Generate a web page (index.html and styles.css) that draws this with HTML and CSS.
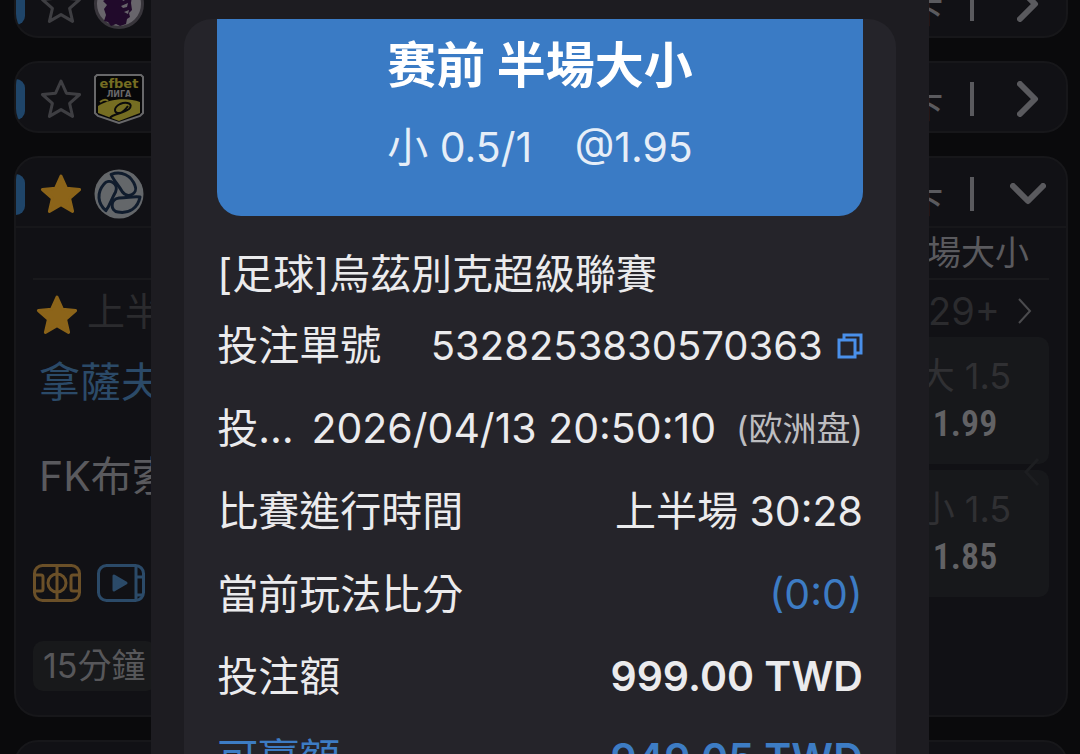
FILE: index.html
```html
<!DOCTYPE html>
<html lang="zh-Hant">

<head>
    <meta charset="UTF-8">
    <meta name="viewport" content="width=device-width, initial-scale=1.0">
    <title>投注單</title>

    <link rel="stylesheet" href="styles.css">
</head>

<body>
    <!-- Shared icon shapes -->
    <svg class="sprite" aria-hidden="true">
        <symbol id="star" viewBox="0 0 42 42">
            <path d="M21 3l5.4 12.200 13.200 1.300-10 8.800 3 13.100L21 31.600l-11.600 6.800 3-13.100-10-8.800 13.200-1.300z" stroke-linejoin="round" />
        </symbol>
        <symbol id="chevron" viewBox="0 0 22 36">
            <path d="M3 3l15 15L3 33" fill="none" stroke="currentColor" stroke-width="6" stroke-linecap="round" stroke-linejoin="round" />
        </symbol>
    </svg>

    <main class="league-list">
        <section class="league">
            <header class="league-head">
                <span class="tab"></span>
                <button class="star" aria-label="收藏"><svg><use href="#star" /></svg></button>
                <svg class="logo" viewBox="0 0 50 50">
                    <circle cx="25" cy="25" r="23.500" fill="#68656b" stroke="#38353b" stroke-width="3" />
                    <path d="M14 12l5 2 3-5 4 4 6-3 1 5 5 2-1 7 1 7-3 3 1 4-3 2-1 5-6 2-4-2-5 2-3-4-4-1 2-6-2-6 3-4-4-4 5-3z" fill="#210a2b" />
                    <path d="M26 20l6-1-2 3zM27 27l7-3-1 4-4 1zM30 33l5-2-1 4z" fill="#68656b" />
                </svg>
                <span class="down">下</span>
                <span class="bar"></span>
                <button class="toggle" aria-label="展開"><svg><use href="#chevron" /></svg></button>
            </header>
        </section>

        <section class="league">
            <header class="league-head">
                <span class="tab"></span>
                <button class="star" aria-label="收藏"><svg><use href="#star" /></svg></button>
                <svg class="logo" viewBox="0 0 50 50">
                    <path d="M3 1h44l2 2v36l-3 3-21 7-21-7-3-3V3z" fill="#070708" stroke="#68686a" stroke-width="2" />
                    <path d="M4 32c10-7 29-9 42-4v11l-21 8-21-8z" fill="#756d22" />
                    <path d="M16 44c2-4 12-4 19-9 5-5-2-8-9-5-7 4-6 9-1 9 4 0 9-7 9-7" fill="none" stroke="#0b0b0c" stroke-width="2" />
                    <path d="M6 28q5-4 8-1" fill="none" stroke="#756d22" stroke-width="2" />
                    <text class="logo-name" x="25" y="14">efbet</text>
                    <text class="logo-sub" x="25" y="23">ЛИГА</text>
                </svg>
                <span class="down">下</span>
                <span class="bar"></span>
                <button class="toggle" aria-label="展開"><svg><use href="#chevron" /></svg></button>
            </header>
        </section>

        <section class="league open">
            <header class="league-head">
                <span class="tab"></span>
                <button class="star active" aria-label="取消收藏"><svg><use href="#star" /></svg></button>
                <svg class="logo" viewBox="0 0 50 50">
                    <circle cx="25" cy="25" r="24.500" fill="#64676a" />
                    <g fill="#64676a" stroke="#101c2d" stroke-width="3" stroke-linejoin="round">
                        <path id="drop" d="M46 28C39 27 34 29 25 29c-9 1-9 13-1 14 11 2 20-4 22-15z" />
                        <use href="#drop" transform="rotate(120 25 25)" />
                        <use href="#drop" transform="rotate(240 25 25)" />
                    </g>
                </svg>
                <span class="down">下</span>
                <span class="bar"></span>
                <button class="toggle expanded" aria-label="收合"><svg><use href="#chevron" /></svg></button>
            </header>

            <div class="league-body">
                <div class="market-head"><span>半場大小</span></div>

                <div class="match-bar">
                    <button class="star active" aria-label="取消收藏"><svg><use href="#star" /></svg></button>
                    <span class="period">上半場</span>
                    <a class="more" href="#">29+
                        <svg viewBox="0 0 14 28"><path d="M1 2l11 12L1 26" fill="none" stroke="currentColor" stroke-width="2" /></svg>
                    </a>
                </div>

                <div class="match">
                    <div class="teams">
                        <p class="team home">拿薩夫</p>
                        <p class="team">FK布索</p>
                        <div class="media">
                            <svg class="pitch" viewBox="0 0 48 38" fill="none" stroke="currentColor" stroke-width="3">
                                <rect x="1.500" y="1.500" width="45" height="35" rx="8" />
                                <path d="M24 1v36M2 11h6q2 0 2 2v12q0 2-2 2H2M46 11h-6q-2 0-2 2v12q0 2 2 2h6" />
                                <circle cx="24" cy="19" r="9" />
                            </svg>
                            <svg class="video" viewBox="0 0 48 38" fill="none" stroke="currentColor" stroke-width="3">
                                <rect x="1.500" y="1.500" width="45" height="35" rx="8" />
                                <path d="M39 1v36M39 13h8M39 31h6" />
                                <path d="M17 12v14l12-7z" fill="currentColor" stroke-linejoin="round" />
                            </svg>
                        </div>
                    </div>
                    <div class="odds">
                        <button class="odd"><span>大 1.5</span><b>1.99</b></button>
                        <button class="odd"><span>小 1.5</span><b>1.85</b></button>
                        <svg class="back" viewBox="0 0 18 30"><path d="M15 2L3 15l12 13" fill="none" stroke="currentColor" stroke-width="3" /></svg>
                    </div>
                </div>

                <button class="chip">15分鐘</button>
            </div>
        </section>

        <section class="league">
            <header class="league-head">
                <span class="tab"></span>
                <button class="star" aria-label="收藏"><svg><use href="#star" /></svg></button>
                <svg class="logo" viewBox="0 0 50 50"><circle cx="25" cy="25" r="24" fill="#4a4a4d" /></svg>
            </header>
        </section>
    </main>

    <!-- Bet slip -->
    <div class="modal" role="dialog" aria-label="投注單">
        <div class="slip">
            <div class="slip-head">
                <div class="slip-title">
                    <h1>赛前 半場大小</h1>
                    <p><span>小 0.5/1</span><span>@1.95</span></p>
                </div>
            </div>

            <h2 class="slip-league">[足球]烏茲別克超級聯賽</h2>

            <dl class="slip-rows">
                <div class="row">
                    <dt>投注單號</dt>
                    <dd class="number">5328253830570363
                        <button class="copy" aria-label="複製">
                            <svg viewBox="0 0 26 26" fill="none" stroke="currentColor" stroke-width="3">
                                <path d="M2 7h16v17H2zM7 7V2h17v18h-6" />
                            </svg>
                        </button>
                    </dd>
                </div>
                <div class="row">
                    <dt>投注時間</dt>
                    <dd>2026/04/13 20:50:10 <small>(欧洲盘)</small></dd>
                </div>
                <div class="row">
                    <dt>比賽進行時間</dt>
                    <dd>上半場 30:28</dd>
                </div>
                <div class="row">
                    <dt>當前玩法比分</dt>
                    <dd class="blue">(0:0)</dd>
                </div>
                <div class="row">
                    <dt>投注額</dt>
                    <dd class="amount">999.00 TWD</dd>
                </div>
                <div class="row blue">
                    <dt>可贏額</dt>
                    <dd class="amount">949.05 TWD</dd>
                </div>
            </dl>
        </div>
    </div>
</body>
</html>
```
FILE: styles.css
```css
* {
    margin: 0;
    padding: 0;
    box-sizing: border-box;
}

body {
    background-color: #0a0a0c;
    color: #ebebed;
    font-family: Inter, "Noto Sans CJK TC", sans-serif;
    font-size: 41px;
    height: 100vh;
    overflow: hidden; /* the slip covers the page, so it does not scroll */
}

button {
    font: inherit;
    color: inherit;
    background: none;
    border: none;
    cursor: pointer;
}

svg {
    display: block;
}

.sprite {
    position: absolute;
    width: 0;
    height: 0;
}

/* League list */
.league-list {
    display: flex;
    flex-direction: column;
    gap: 23px;
    margin-top: -34px; /* list is scrolled a little */
    padding: 0 12px 0 14px;
}

.league {
    background-color: #111115;
    border: 2px solid #17171a;
    border-radius: 24px;
    overflow: hidden;
}

.league-head {
    display: flex;
    align-items: center;
    height: 68px;
    padding-top: 4px;
    padding-right: 20px;
    color: #5a5a5e;
}

.league.open .league-head {
    height: 70px;
    border-bottom: 2px solid #17171a;
}

.tab {
    width: 9px;
    height: 41px;
    margin-right: 15px;
    border-radius: 0 9px 9px 0;
    background-color: #1f4569;
}

.star svg {
    width: 42px;
    height: 42px;
    fill: none;
    stroke: #3e3e42;
    stroke-width: 3;
}

.star.active svg {
    fill: #8c6419;
    stroke: #8c6419;
}

.logo {
    width: 50px;
    height: 50px;
    margin-left: 12px;
}

.logo-name,
.logo-sub {
    font-family: "DejaVu Sans", sans-serif;
    font-weight: bold;
    text-anchor: middle;
}

.logo-name {
    font-size: 13px;
    fill: #756d22;
}

.logo-sub {
    font-size: 8px;
    fill: #68686a;
}

.down {
    margin-left: auto;
    padding-top: 12px;
    font-size: 30px;
    font-weight: 500;
}

.bar {
    width: 4px;
    height: 34px;
    margin: 0 36px 0 27px;
    background-color: #5a5a5e;
}

.toggle {
    display: flex;
    justify-content: center;
    width: 36px;
}

.toggle svg {
    width: 22px;
    height: 36px;
}

.toggle.expanded svg {
    transform: rotate(90deg);
}

.league-body {
    padding: 0 17px 24px;
}

.market-head {
    display: flex;
    justify-content: flex-end;
    height: 52px;
    padding-right: 4px;
    border-bottom: 2px solid #19191c;
    color: #5a5a5e;
    font-size: 34px;
    line-height: 50px;
}

.market-head span {
    width: 168px;
    text-align: center;
}

.match-bar {
    display: flex;
    align-items: center;
    height: 57px;
    padding-top: 4px;
    padding-left: 3px;
    color: #2b2b2e;
    font-size: 38px;
    line-height: 48px;
}

.match-bar .star {
    padding-top: 8px;
}

.period {
    margin-left: 9px;
}

.more {
    display: flex;
    align-items: center;
    gap: 18px;
    margin-left: auto;
    margin-right: 17px;
    color: inherit;
    text-decoration: none;
}

.more svg {
    width: 14px;
    height: 28px;
    color: #4b4b4e;
}

.match {
    display: flex;
    justify-content: space-between;
}

.team {
    height: 94px;
    padding-left: 6px;
    color: #5a5a5e;
    line-height: 90px;
    white-space: nowrap;
}

.team.home {
    color: #2b4a68;
}

.media {
    display: flex;
    gap: 16px;
    padding-top: 39px;
}

.media svg {
    width: 48px;
    height: 38px;
}

.pitch {
    color: #6b5028;
}

.video {
    color: #2b4a68;
}

.odds {
    position: relative;
    display: flex;
    flex-direction: column;
    gap: 6px;
    width: 168px;
}

.odd {
    display: flex;
    flex-direction: column;
    align-items: center;
    height: 127px;
    padding-top: 15px;
    border-radius: 10px;
    background-color: #17181b;
    color: #303033;
    font-size: 36px;
    line-height: 48px;
}

.odd b {
    color: #626265;
    font-family: "Roboto Condensed", Roboto, sans-serif;
    font-size: 36px;
    font-weight: 600;
}

.back {
    position: absolute;
    right: 8px;
    top: 120px;
    width: 18px;
    height: 30px;
    color: #1d1e21;
}

.chip {
    height: 50px;
    margin-top: 39px;
    padding: 0 10px;
    border-radius: 10px;
    background-color: #18191b;
    color: #57575a;
    font-size: 34px;
    line-height: 48px;
}

/* Bet slip */
.modal {
    position: fixed;
    top: 0;
    bottom: 0;
    left: 14%;
    right: 14%;
    padding: 19px 33px 0;
    background-color: #1d1c21;
    overflow: hidden;
}

.slip {
    min-height: 100%;
    padding: 0 33px;
    border-radius: 28px 28px 0 0;
    background-color: #25242a;
}

.slip-head {
    display: flex;
    justify-content: center;
    height: 197px;
    padding-top: 10px;
    border-radius: 0 0 24px 24px;
    background-color: #3a7bc5;
    color: #fff;
}

.slip-title h1 {
    font-size: 49px;
    line-height: 74px;
}

.slip-title p {
    display: flex;
    justify-content: space-between;
    margin-top: 8px;
    line-height: 72px;
    color: #e6eef8;
}

.slip-league {
    margin-top: 28px;
    font-size: inherit;
    font-weight: 400;
    line-height: 60px;
}

.row {
    display: flex;
    justify-content: space-between;
    gap: 4px;
    height: 83px;
    line-height: 83px;
    white-space: nowrap;
}

.row:nth-child(n + 4) {
    height: 82px;
    line-height: 82px;
}

.row dt {
    min-width: 0;
    overflow: hidden;
    text-overflow: ellipsis;
}

.row dd {
    display: flex;
    flex-shrink: 0;
    align-items: center;
}

.row .number {
    font-size: 40px;
}

.row small {
    margin-left: 20px;
    color: #bdbdc0;
    font-size: 34px;
}

.row .amount {
    font-weight: 600;
}

.blue {
    color: #3d7cc4;
}

.copy {
    margin-left: 14px;
    color: #4a90ea;
}

.copy svg {
    width: 26px;
    height: 26px;
}
```
